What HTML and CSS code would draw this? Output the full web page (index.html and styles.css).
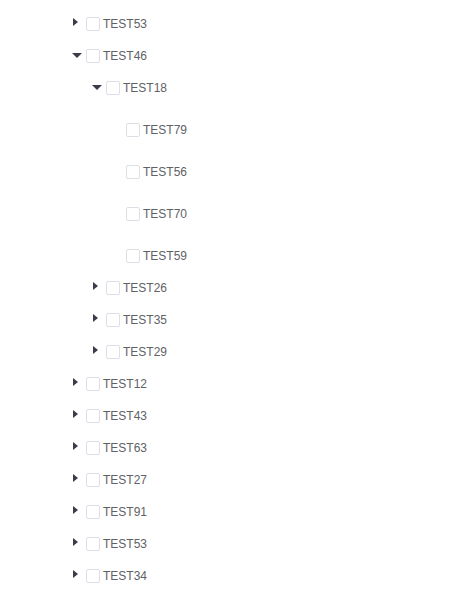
FILE: index.html
```html
<!DOCTYPE html>
<html>
<head>
<meta charset="utf-8">
<link rel="stylesheet" href="styles.css">
</head>
<body>
<div class="tree">
  <div class="node">
    <div class="row"><span class="caret right"></span><span class="box"></span><span class="label">TEST53</span></div>
  </div>
  <div class="node">
    <div class="row"><span class="caret down"></span><span class="box"></span><span class="label">TEST46</span></div>
    <div class="children">
      <div class="node">
        <div class="row"><span class="caret down"></span><span class="box"></span><span class="label">TEST18</span></div>
        <div class="children">
          <div class="node leaf"><div class="row"><span class="caret none"></span><span class="box"></span><span class="label">TEST79</span></div></div>
          <div class="node leaf"><div class="row"><span class="caret none"></span><span class="box"></span><span class="label">TEST56</span></div></div>
          <div class="node leaf"><div class="row"><span class="caret none"></span><span class="box"></span><span class="label">TEST70</span></div></div>
          <div class="node leaf"><div class="row"><span class="caret none"></span><span class="box"></span><span class="label">TEST59</span></div></div>
        </div>
      </div>
      <div class="node"><div class="row"><span class="caret right"></span><span class="box"></span><span class="label">TEST26</span></div></div>
      <div class="node"><div class="row"><span class="caret right"></span><span class="box"></span><span class="label">TEST35</span></div></div>
      <div class="node"><div class="row"><span class="caret right"></span><span class="box"></span><span class="label">TEST29</span></div></div>
    </div>
  </div>
  <div class="node"><div class="row"><span class="caret right"></span><span class="box"></span><span class="label">TEST12</span></div></div>
  <div class="node"><div class="row"><span class="caret right"></span><span class="box"></span><span class="label">TEST43</span></div></div>
  <div class="node"><div class="row"><span class="caret right"></span><span class="box"></span><span class="label">TEST63</span></div></div>
  <div class="node"><div class="row"><span class="caret right"></span><span class="box"></span><span class="label">TEST27</span></div></div>
  <div class="node"><div class="row"><span class="caret right"></span><span class="box"></span><span class="label">TEST91</span></div></div>
  <div class="node"><div class="row"><span class="caret right"></span><span class="box"></span><span class="label">TEST53</span></div></div>
  <div class="node"><div class="row"><span class="caret right"></span><span class="box"></span><span class="label">TEST34</span></div></div>
</div>
</body>
</html>
```
FILE: styles.css
```css
html, body {
  margin: 0;
  padding: 0;
  background: #fff;
}
.tree {
  padding: 8px 0 0 70px;
  font-family: "Liberation Sans", Arial, sans-serif;
  font-size: 12px;
  color: #606266;
}
.children {
  padding-left: 20px;
}
.leaf {
  padding-top: 10px;
}
.row {
  display: flex;
  align-items: center;
  height: 32px;
}
.caret {
  width: 16px;
  height: 14px;
  flex: none;
  position: relative;
}
.caret.right::before {
  content: "";
  position: absolute;
  left: 3px;
  top: 1px;
  border-left: 5px solid #3b3b4a;
  border-top: 4.5px solid transparent;
  border-bottom: 4.5px solid transparent;
}
.caret.down::before {
  content: "";
  position: absolute;
  left: 2px;
  top: 4px;
  border-top: 5px solid #3b3b4a;
  border-left: 5px solid transparent;
  border-right: 5px solid transparent;
}
.box {
  width: 14px;
  height: 14px;
  box-sizing: border-box;
  border: 1px solid #dcdfe6;
  border-radius: 2px;
  background: #fff;
  flex: none;
}
.label {
  margin-left: 3px;
  line-height: 14px;
}
```
